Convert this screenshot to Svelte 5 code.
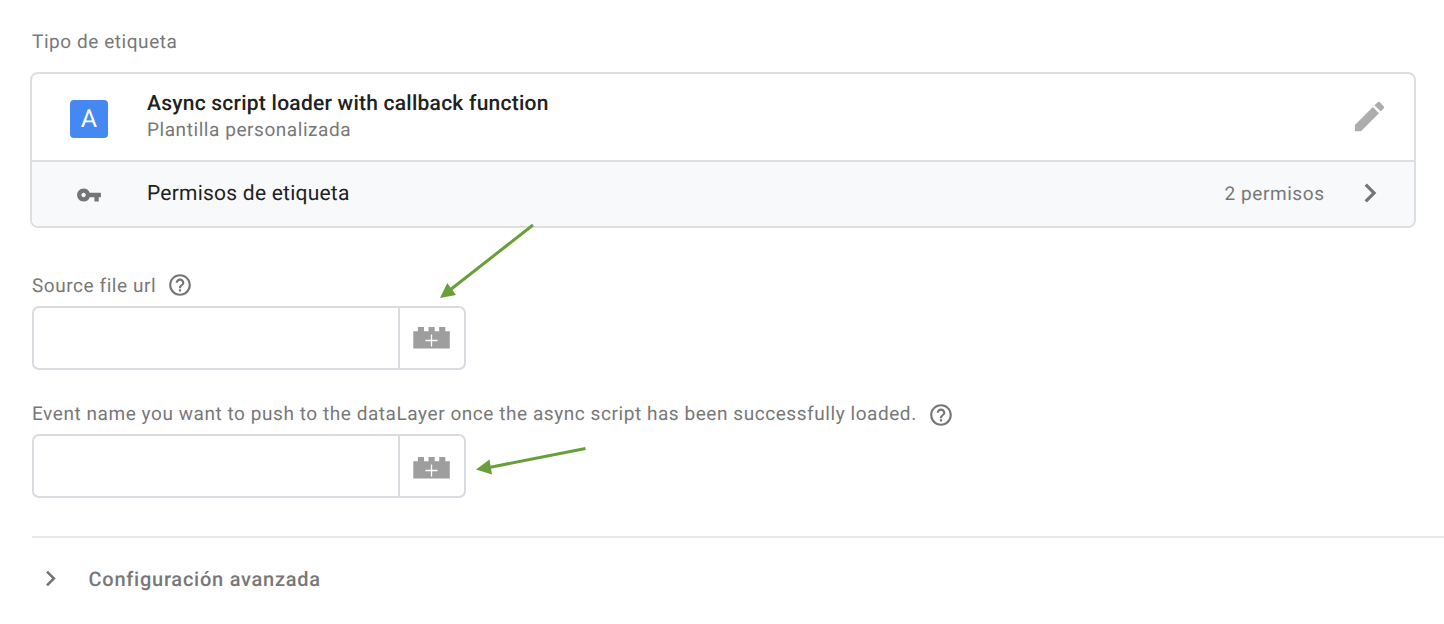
<script>
  const fields = [
    { label: 'Source file url', value: '' },
    {
      label: 'Event name you want to push to the dataLayer once the async script has been successfully loaded.',
      value: ''
    }
  ];
</script>

<main class="panel">
  <div class="caption">Tipo de etiqueta</div>

  <section class="card">
    <div class="row type-row">
      <div class="lead"><div class="logo">A</div></div>
      <div class="names">
        <div class="title">Async script loader with callback function</div>
        <div class="subtitle">Plantilla personalizada</div>
      </div>
      <svg class="pencil" viewBox="0 0 24 24" aria-hidden="true">
        <path d="M3 17.25V21h3.75L17.81 9.94l-3.75-3.75L3 17.25zM20.71 7.04a.996.996 0 0 0 0-1.41l-2.34-2.34a.996.996 0 0 0-1.41 0l-1.83 1.83 3.75 3.75 1.83-1.83z" />
      </svg>
    </div>
    <div class="row perm-row">
      <div class="lead">
        <svg class="key" viewBox="0 0 24 24" aria-hidden="true">
          <path d="M12.65 10A5.99 5.99 0 0 0 7 6c-3.31 0-6 2.69-6 6s2.69 6 6 6a5.99 5.99 0 0 0 5.65-4H17v4h4v-4h2v-4H12.65zM7 14c-1.1 0-2-.9-2-2s.9-2 2-2 2 .9 2 2-.9 2-2 2z" />
        </svg>
      </div>
      <div class="perm-title">Permisos de etiqueta</div>
      <div class="perm-count">2 permisos</div>
      <svg class="chevron" viewBox="0 0 24 24" aria-hidden="true">
        <path d="M10 6 8.59 7.41 13.17 12l-4.58 4.59L10 18l6-6z" />
      </svg>
    </div>
  </section>

  {#each fields as field, i}
    <section class="field" class:second={i === 1}>
      <div class="field-label">
        <span>{field.label}</span>
        <svg class="help" viewBox="0 0 24 24" aria-hidden="true">
          <path d="M11 18h2v-2h-2v2zm1-16C6.48 2 2 6.48 2 12s4.48 10 10 10 10-4.48 10-10S17.52 2 12 2zm0 18c-4.41 0-8-3.59-8-8s3.59-8 8-8 8 3.59 8 8-3.59 8-8 8zm0-14c-2.21 0-4 1.79-4 4h2c0-1.1.9-2 2-2s2 .9 2 2c0 2-3 1.75-3 5h2c0-2.25 3-2.5 3-5 0-2.21-1.79-4-4-4z" />
        </svg>
      </div>
      <div class="control">
        <input type="text" value={field.value} aria-label={field.label} />
        <button type="button" aria-label={field.label}>
          <svg class="brick" viewBox="0 0 37 22" aria-hidden="true">
            <path class="body" d="M0.300 4.300H4.900V0H11V4.300H15.500V0H21.700V4.300H26.200V0H32.300V4.300H36.800V21.500H0.300z" />
            <path class="plus" d="M12.500 13.500H24.500M18.500 7.500V19.500" />
          </svg>
        </button>
      </div>
    </section>
  {/each}

  <section class="advanced">
    <svg class="chevron-small" viewBox="0 0 24 24" aria-hidden="true">
      <path d="M10 6 8.59 7.41 13.17 12l-4.58 4.590L10 18l6-6z" />
    </svg>
    <span>Configuración avanzada</span>
  </section>

  <svg class="arrows" viewBox="0 0 1444 624" aria-hidden="true">
    <path class="shaft" d="M533 225 450 290M585.500 448.500 489 467.500" />
    <path class="head" d="M440 298 447.300 283 456 295zM476 469.500 489.500 459.500 492 474.500z" />
  </svg>
</main>

<style>
  :global(body) {
    background: #fff;
  }
  .panel {
    position: relative;
    box-sizing: border-box;
    width: 1444px;
    height: 624px;
    padding: 30px 0 0 32px;
    overflow: hidden;
    font-family: Roboto, sans-serif;
    font-size: 19px;
    letter-spacing: 0.560px;
    text-rendering: geometricPrecision;
    color: #787878;
  }
  .caption {
    height: 24px;
    line-height: 24px;
  }
  .card {
    box-sizing: border-box;
    width: 1386px;
    height: 156px;
    margin: 18px 0 0 -2px;
    border: 2px solid #dddee2;
    border-radius: 8px;
    overflow: hidden;
  }
  .row {
    display: flex;
    align-items: center;
    box-sizing: border-box;
  }
  .type-row {
    height: 88px;
    padding-right: 25px;
    border-bottom: 2px solid #dddee2;
  }
  .perm-row {
    height: 64px;
    padding: 0 25px 2px 0;
    background: #f8f9fb;
  }
  .lead {
    display: flex;
    justify-content: center;
    flex: none;
    width: 115px;
  }
  .logo {
    width: 38px;
    height: 38px;
    margin: 4px 1px 0 0;
    border-radius: 4px;
    background: #4688f1;
    color: #fff;
    font-size: 25px;
    line-height: 40px;
    letter-spacing: 0;
    text-align: center;
  }
  .names {
    flex: 1;
  }
  .title {
    margin-top: 1px;
    font-size: 21px;
    font-weight: 500;
    line-height: 25px;
    letter-spacing: 0.240px;
    color: #212121;
  }
  .subtitle {
    line-height: 26px;
  }
  .pencil {
    width: 39px;
    height: 39px;
    margin-top: -2px;
  }
  .key {
    width: 26px;
    height: 26px;
    margin: 4px 0.500px 0 0;
  }
  .perm-title {
    flex: 1;
    padding-top: 2px;
    font-size: 21px;
    letter-spacing: 0.230px;
    color: #212121;
  }
  .chevron {
    width: 38px;
    height: 38px;
    margin: 0 0.500px 0 26px;
  }
  svg {
    display: block;
    flex: none;
    fill: #757575;
  }
  svg.pencil {
    fill: #adadad;
  }
  .field {
    margin-top: 44px;
  }
  .field.second {
    margin-top: 30px;
  }
  .field-label {
    display: flex;
    align-items: center;
    height: 28px;
    line-height: 28px;
  }
  .help {
    width: 26px;
    height: 26px;
    margin: -2px 0 0 11px;
  }
  .second .help {
    margin-top: 2px;
  }
  .control {
    display: flex;
    box-sizing: border-box;
    width: 434px;
    height: 64px;
    margin-top: 6px;
    border: 2px solid #dadbe0;
    border-radius: 7px;
  }
  input {
    flex: 1;
    min-width: 0;
    padding: 0 16px;
    border: 0;
    background: none;
    font: inherit;
    outline: 0;
  }
  button {
    display: flex;
    align-items: center;
    justify-content: center;
    box-sizing: border-box;
    width: 66px;
    padding: 0 1px 0 0;
    border: 0;
    border-left: 2px solid #dadbe0;
    background: none;
  }
  .second button {
    padding-top: 3px;
  }
  .brick {
    width: 37px;
    height: 22px;
  }
  .brick .body {
    fill: #9e9e9e;
  }
  .plus {
    fill: none;
    stroke: #fff;
    stroke-width: 1.300;
  }
  .advanced {
    display: flex;
    align-items: center;
    height: 80px;
    margin-top: 38px;
    border-top: 2px solid #e8e9ed;
    font-size: 20px;
    font-weight: 500;
    letter-spacing: 0.750px;
  }
  .advanced span {
    padding-top: 2px;
  }
  .chevron-small {
    width: 31px;
    height: 31px;
    margin: 0 22.500px 0 3px;
  }
  .arrows {
    position: absolute;
    inset: 0;
    width: 1444px;
    height: 624px;
    pointer-events: none;
  }
  .shaft {
    fill: none;
    stroke: #689f38;
    stroke-width: 3;
  }
  .head {
    fill: #689f38;
  }
</style>
